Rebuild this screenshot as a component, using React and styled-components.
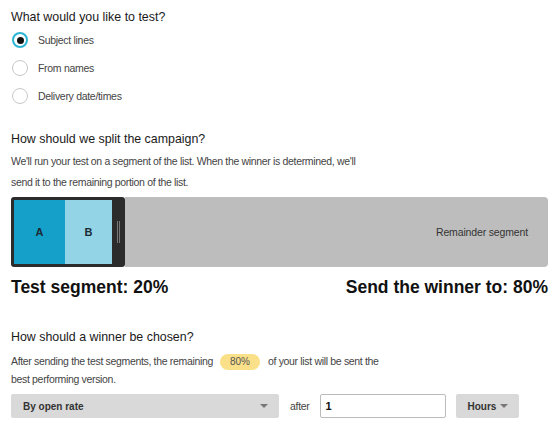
import styled, { createGlobalStyle } from "styled-components";

const Global = createGlobalStyle`
  body {
    margin: 0;
    background: #fff;
    font-family: "Liberation Sans", Arial, sans-serif;
    color: #222;
  }
`;

const Page = styled.div`
  width: 560px;
  padding: 8px 12px 0 11px;
  box-sizing: border-box;
`;

const Heading = styled.h3`
  margin: 0;
  font-size: 12.4px;
  font-weight: normal;
  color: #1a1a1a;
  line-height: 18px;
`;

const Radios = styled.div`
  display: flex;
  flex-direction: column;
  gap: 12px;
  margin-top: 6px;
  padding-left: 1px;
`;

const RadioRow = styled.label`
  display: flex;
  align-items: center;
  gap: 10px;
  font-size: 10.5px;
  letter-spacing: -0.3px;
  color: #444;
  height: 16px;
`;

const RadioDot = styled.span`
  width: 16px;
  height: 16px;
  box-sizing: border-box;
  border-radius: 50%;
  border: ${(p) => (p.$on ? "2px solid #2eb4d2" : "1px solid #c8c8c8")};
  background: #fff;
  display: flex;
  align-items: center;
  justify-content: center;
  &::after {
    content: "";
    display: ${(p) => (p.$on ? "block" : "none")};
    width: 7px;
    height: 7px;
    border-radius: 50%;
    background: #111;
  }
`;

const Section = styled.div`
  margin-top: ${(p) => p.$top}px;
`;

const Text = styled.p`
  margin: ${(p) => p.$mt}px 0 0;
  font-size: 10.5px;
  letter-spacing: -0.33px;
  line-height: ${(p) => p.$lh}px;
  color: #444;
  white-space: nowrap;
`;

const Bar = styled.div`
  display: flex;
  height: 70px;
  margin-top: 4px;
  width: 537px;
`;

const TestBox = styled.div`
  display: flex;
  width: 114px;
  background: #2b2b2b;
  border-radius: 3px;
  padding: 3px 0 3px 3px;
  box-sizing: border-box;
`;

const Seg = styled.div`
  flex: ${(p) => p.$w} 0 0;
  background: ${(p) => p.$bg};
  display: flex;
  align-items: center;
  justify-content: center;
  font-size: 11px;
  font-weight: bold;
  color: #1a2a33;
`;

const Handle = styled.div`
  width: 13px;
  display: flex;
  align-items: center;
  justify-content: center;
  gap: 1px;
  &::before,
  &::after {
    content: "";
    width: 1px;
    height: 22px;
    background: #777;
  }
`;

const Remainder = styled.div`
  flex: 1;
  background: #bdbdbd;
  border-radius: 0 4px 4px 0;
  display: flex;
  align-items: center;
  justify-content: flex-end;
  padding-right: 20px;
  font-size: 10.5px;
  letter-spacing: -0.15px;
  color: #333;
`;

const Totals = styled.div`
  display: flex;
  justify-content: space-between;
  width: 537px;
  margin-top: 10px;
  font-size: 17.5px;
  font-weight: bold;
  color: #111;
`;

const Badge = styled.span`
  display: inline-block;
  background: #fbe08a;
  border-radius: 9px;
  padding: 0 10px;
  margin: 0 8px 0 7px;
  font-size: 10px;
  letter-spacing: 0;
  line-height: 16px;
  color: #555;
`;

const Controls = styled.div`
  display: flex;
  align-items: center;
  margin-top: 6px;
`;

const Select = styled.div`
  width: 268px;
  height: 24px;
  background: #d9d9d9;
  border-radius: 2px;
  display: flex;
  align-items: center;
  justify-content: space-between;
  padding: 0 11px 0 12px;
  box-sizing: border-box;
  font-size: 10px;
  font-weight: bold;
  color: #333;
`;

const HoursButton = styled(Select)`
  width: 63px;
  margin-left: 10px;
`;

const Caret = styled.span`
  width: 0;
  height: 0;
  border-left: 4px solid transparent;
  border-right: 4px solid transparent;
  border-top: 4px solid #777;
`;

const After = styled.span`
  font-size: 10.5px;
  letter-spacing: -0.3px;
  color: #444;
  margin: 0 10px 0 11px;
`;

const Input = styled.div`
  width: 126px;
  height: 24px;
  box-sizing: border-box;
  border: 1px solid #bbb;
  border-radius: 2px;
  display: flex;
  align-items: center;
  padding-left: 5px;
  font-size: 11px;
  font-weight: bold;
  color: #111;
`;

export default function App() {
  const options = ["Subject lines", "From names", "Delivery date/times"];
  return (
    <Page>
      <Global />
      <Heading>What would you like to test?</Heading>
      <Radios>
        {options.map((o, i) => (
          <RadioRow key={o}>
            <RadioDot $on={i === 0} />
            {o}
          </RadioRow>
        ))}
      </Radios>

      <Section $top={26}>
        <Heading>How should we split the campaign?</Heading>
        <Text $mt={3} $lh={21}>
          We'll run your test on a segment of the list. When the winner is determined, we'll
          <br />
          send it to the remaining portion of the list.
        </Text>
        <Bar>
          <TestBox>
            <Seg $w={51} $bg="#14a0c9">A</Seg>
            <Seg $w={47} $bg="#94d4e7">B</Seg>
            <Handle />
          </TestBox>
          <Remainder>Remainder segment</Remainder>
        </Bar>
        <Totals>
          <span>Test segment: 20%</span>
          <span>Send the winner to: 80%</span>
        </Totals>
      </Section>

      <Section $top={30}>
        <Heading>How should a winner be chosen?</Heading>
        <Text $mt={6} $lh={18}>
          After sending the test segments, the remaining<Badge>80%</Badge>of your list will be sent the
          <br />
          best performing version.
        </Text>
        <Controls>
          <Select>
            By open rate
            <Caret />
          </Select>
          <After>after</After>
          <Input>1</Input>
          <HoursButton>
            Hours
            <Caret />
          </HoursButton>
        </Controls>
      </Section>
    </Page>
  );
}
